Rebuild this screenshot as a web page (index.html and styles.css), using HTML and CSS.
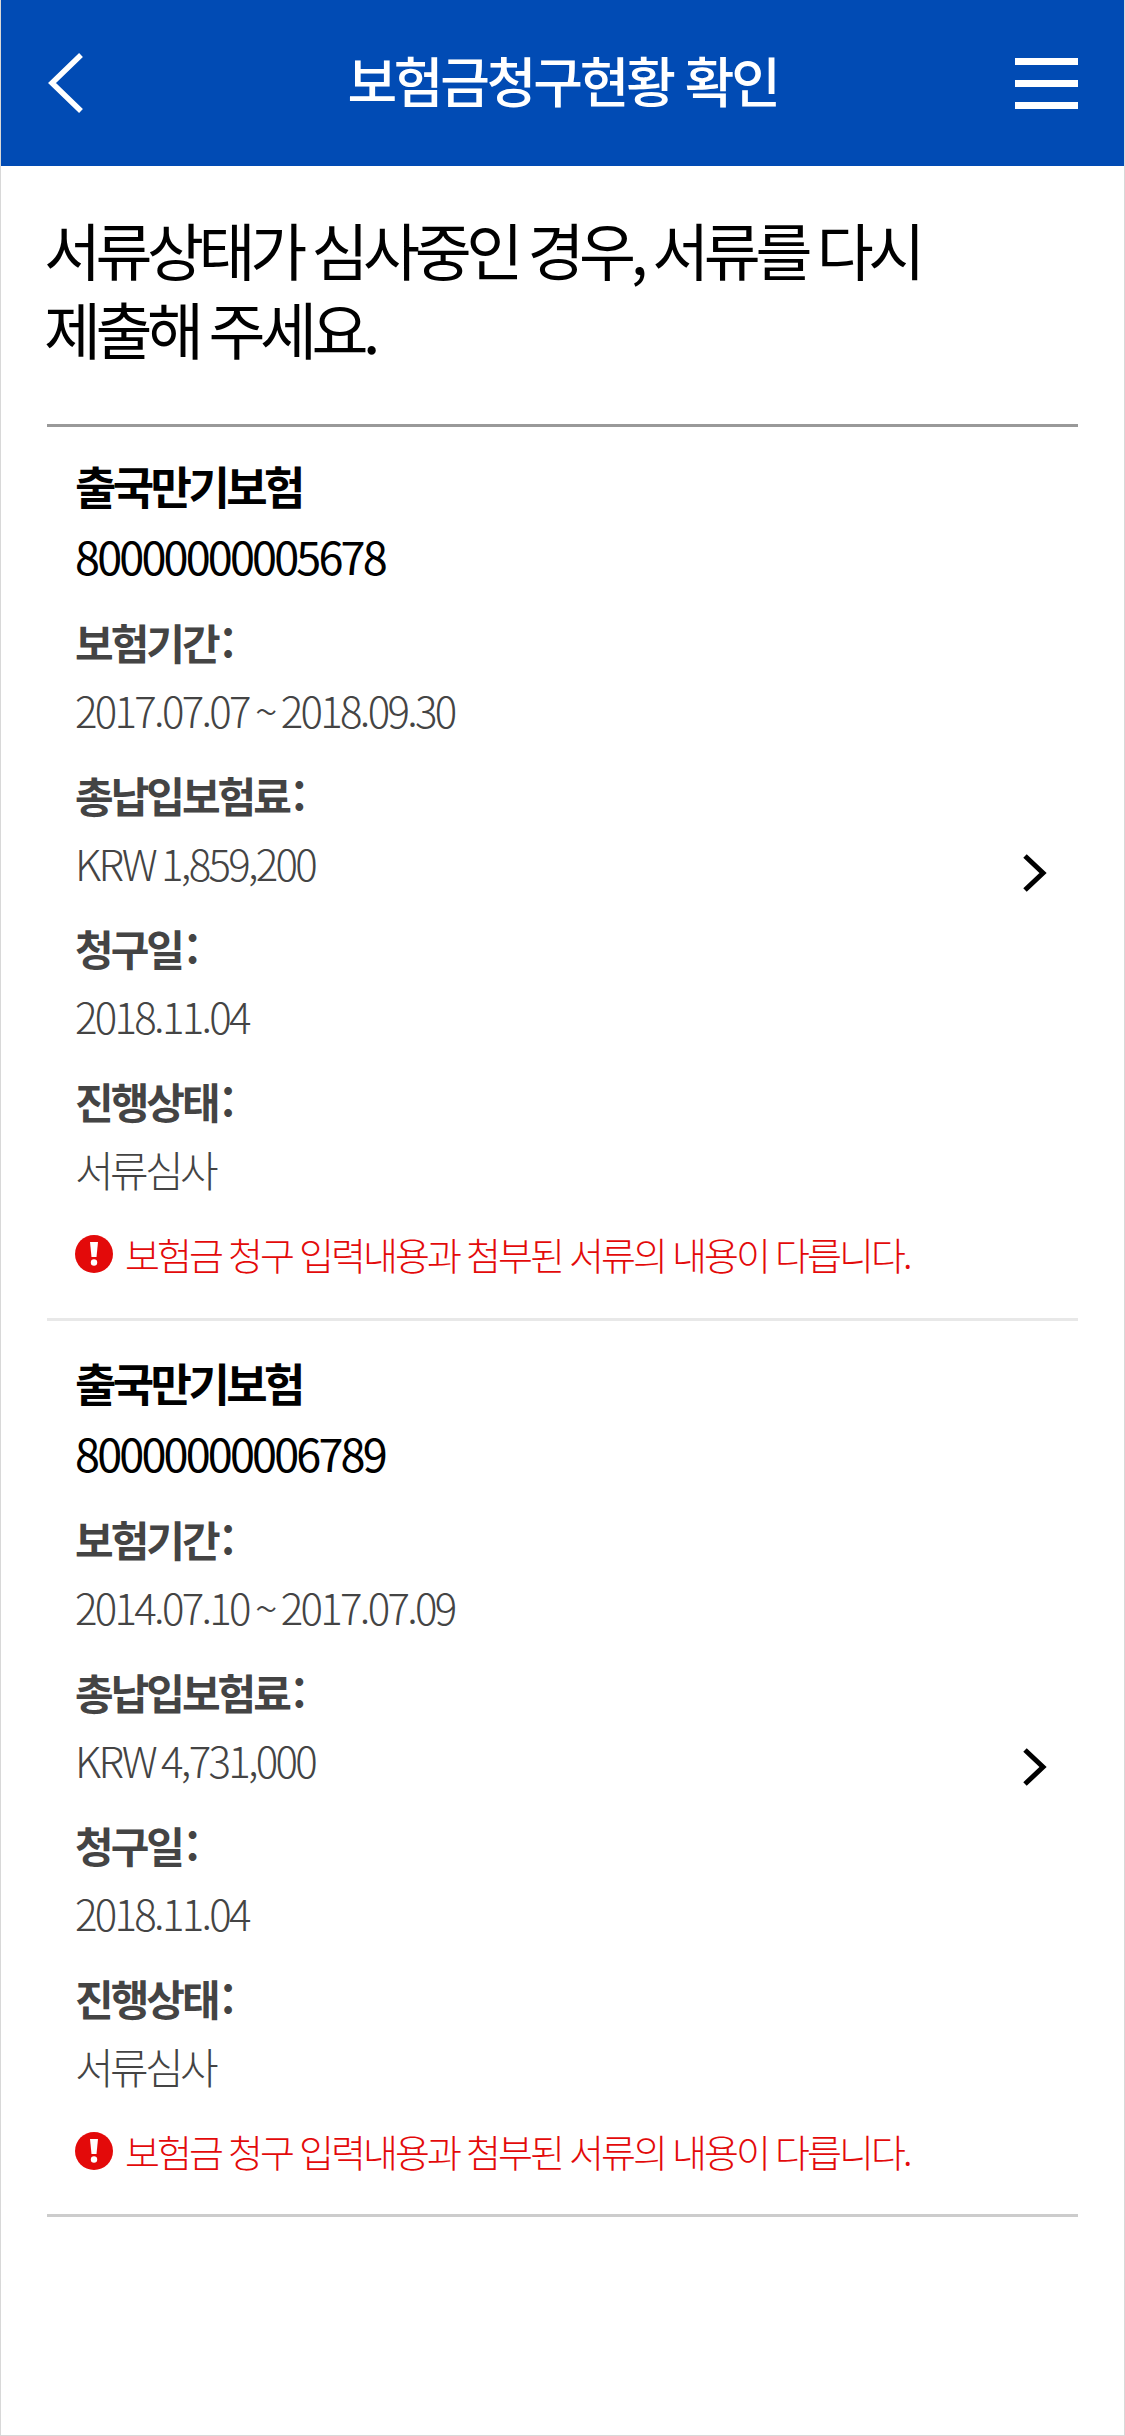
FILE: index.html
```html
<!DOCTYPE html>
<html lang="ko">
  <head>
    <meta http-equiv="Content-Type" content="text/html;charset=UTF-8" />
    <meta name="viewport" content="width=device-width, initial-scale=1.0" />
    <title>보험금청구현황 확인</title>
    <link rel="stylesheet" href="styles.css">
  </head>
  <body>
    <header class="topbar">
      <svg class="back-icon" width="37" height="60" viewBox="0 0 37 60" fill="none" stroke="#fff" stroke-width="5.5">
        <path d="M34 2 L5 30 L34 58" />
      </svg>
      <h1 class="topbar-title">보험금청구현황 확인</h1>
      <div class="menu-icon"><span></span><span></span><span></span></div>
    </header>

    <main class="content">
      <h2 class="notice">서류상태가 심사중인 경우, 서류를 다시<br>제출해 주세요.</h2>

      <section class="claim claim-first">
        <div class="claim-body">
          <h3 class="claim-name">출국만기보험</h3>
          <p class="claim-no">80000000005678</p>
          <dl class="claim-info">
            <dt>보험기간 :</dt>
            <dd>2017.07.07 ~ 2018.09.30</dd>
            <dt>총납입보험료 :</dt>
            <dd>KRW 1,859,200</dd>
            <dt>청구일 :</dt>
            <dd>2018.11.04</dd>
            <dt>진행상태 :</dt>
            <dd class="claim-status">서류심사</dd>
          </dl>
          <p class="claim-alert">
            <svg class="alert-icon" width="38" height="38" viewBox="0 0 38 38">
              <circle cx="19" cy="19" r="19" fill="#e30a0a" />
              <path d="M15 7 H23 L21.5 22 H16.5 Z" fill="#fff" />
              <circle cx="19" cy="27.5" r="3.2" fill="#fff" />
            </svg>
            보험금 청구 입력내용과 첨부된 서류의 내용이 다릅니다.
          </p>
        </div>
        <svg class="chevron" width="26" height="40" viewBox="0 0 26 40" fill="none" stroke="#000" stroke-width="5">
          <path d="M3 3 L21 20 L3 37" />
        </svg>
      </section>

      <section class="claim claim-last">
        <div class="claim-body">
          <h3 class="claim-name">출국만기보험</h3>
          <p class="claim-no">80000000006789</p>
          <dl class="claim-info">
            <dt>보험기간 :</dt>
            <dd>2014.07.10 ~ 2017.07.09</dd>
            <dt>총납입보험료 :</dt>
            <dd>KRW 4,731,000</dd>
            <dt>청구일 :</dt>
            <dd>2018.11.04</dd>
            <dt>진행상태 :</dt>
            <dd class="claim-status">서류심사</dd>
          </dl>
          <p class="claim-alert">
            <svg class="alert-icon" width="38" height="38" viewBox="0 0 38 38">
              <circle cx="19" cy="19" r="19" fill="#e30a0a" />
              <path d="M15 7 H23 L21.5 22 H16.5 Z" fill="#fff" />
              <circle cx="19" cy="27.5" r="3.2" fill="#fff" />
            </svg>
            보험금 청구 입력내용과 첨부된 서류의 내용이 다릅니다.
          </p>
        </div>
        <svg class="chevron" width="26" height="40" viewBox="0 0 26 40" fill="none" stroke="#000" stroke-width="5">
          <path d="M3 3 L21 20 L3 37" />
        </svg>
      </section>
    </main>
  </body>
</html>
```

FILE: styles.css
```css
html, body {
  margin: 0;
  padding: 0;
}

body {
  width: 1125px;
  height: 2436px;
  box-sizing: border-box;
  border: 1px solid #d8d8d8;
  border-top: none;
  background: #fff;
  color: #000;
  font-family: "Noto Sans CJK KR", "Noto Sans", sans-serif;
  overflow: hidden;
}

/* Top bar */
.topbar {
  display: grid;
  grid-template-columns: 1fr auto 1fr;
  align-items: center;
  height: 166px;
  padding: 0 47px;
  margin: 0 -1px;
  background: #014bb4;
}

.back-icon {
  justify-self: start;
}

.topbar-title {
  margin: 0 0 6px;
  color: #fff;
  font-size: 54px;
  font-weight: 500;
  letter-spacing: -3.2px;
  line-height: 1;
}

.menu-icon {
  display: flex;
  flex-direction: column;
  gap: 15px;
  justify-self: end;
  width: 63px;
}

.menu-icon span {
  display: block;
  height: 7px;
  background: #fff;
}

/* Content */
.content {
  padding: 0 46px;
}

.notice {
  margin: 44px 0 0 -3px;
  font-size: 62px;
  font-weight: 400;
  letter-spacing: -5.5px;
  word-spacing: -2px;
  line-height: 79px;
}

.claim {
  display: flex;
  align-items: center;
  justify-content: space-between;
  padding: 24px 30px 30px 28px;
  border-bottom: 3px solid #e8e8e8;
}

.claim-first {
  margin-top: 56px;
  border-top: 3px solid #999;
}

.claim-first .chevron {
  margin-top: 6px;
}

.claim-last {
  padding-top: 27px;
  padding-bottom: 29px;
  border-bottom-color: #ccc;
}

.claim-name {
  margin: 0;
  font-size: 45px;
  font-weight: 700;
  letter-spacing: -3.6px;
  line-height: 70px;
}

.claim-no {
  margin: 0;
  font-size: 45px;
  font-weight: 400;
  letter-spacing: -2.85px;
  line-height: 70px;
}

.claim-info {
  margin: 0;
  color: #444;
  font-size: 42px;
  line-height: 68px;
}

.claim-info dt {
  margin-top: 17px;
  font-weight: 700;
  letter-spacing: -3px;
  word-spacing: -5px;
}

.claim-info dd {
  margin: 0;
  font-weight: 300;
  letter-spacing: -2.7px;
  word-spacing: -3px;
}

.claim-info .claim-status {
  letter-spacing: -3.6px;
}

.claim-alert {
  display: flex;
  align-items: center;
  gap: 12px;
  margin: 17px 0 0;
  color: #e30a0a;
  font-size: 38px;
  font-weight: 300;
  letter-spacing: -3px;
  word-spacing: -0.5px;
  line-height: 68px;
}

.alert-icon {
  flex: none;
}

.chevron {
  flex: none;
}
```
